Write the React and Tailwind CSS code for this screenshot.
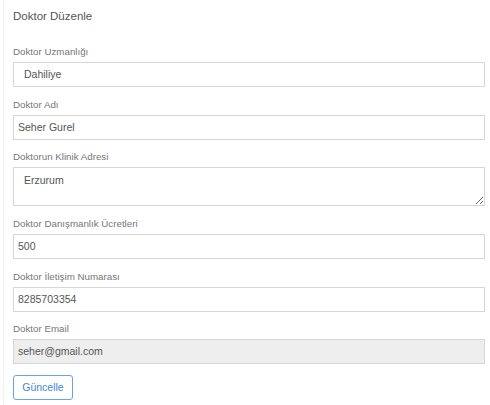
import React from "react";

const font = { fontFamily: '"Liberation Sans", Arial, sans-serif' };

function Label({ children, className = "" }) {
  return (
    <div className={`text-[9.75px] leading-[13px] text-[#777777] mb-[4px] ${className}`}>
      {children}
    </div>
  );
}

function Field({ value, indent = false, disabled = false }) {
  return (
    <div
      className={`h-[25px] w-full border border-[#d6d6d6] flex items-center text-[10.5px] text-[#555555] ${
        indent ? "pl-[10px]" : "pl-[4px]"
      } ${disabled ? "bg-[#eeeeee]" : "bg-white"}`}
    >
      {value}
    </div>
  );
}

export default function App() {
  return (
    <div className="w-[490px] h-[405px] bg-white overflow-hidden" style={font}>
      <div className="ml-[3px] border-l border-[#f3f3f3] h-full pl-[9px] pr-[5px] pt-[9px]">
        <div className="text-[11.5px] leading-[14px] text-[#555555]">Doktor Düzenle</div>

        <div className="mt-[22px]">
          <Label>Doktor Uzmanlığı</Label>
          <Field value="Dahiliye" indent />
        </div>

        <div className="mt-[11px]">
          <Label>Doktor Adı</Label>
          <Field value="Seher Gurel" />
        </div>

        <div className="mt-[10px]">
          <Label>Doktorun Klinik Adresi</Label>
          <textarea
            readOnly
            defaultValue="Erzurum"
            className="block h-[39px] w-full border border-[#d6d6d6] pl-[10px] pt-[5px] text-[10.5px] leading-[14px] text-[#555555] outline-none resize-y"
            style={font}
          />
        </div>

        <div className="mt-[11px]">
          <Label>Doktor Danışmanlık Ücretleri</Label>
          <Field value="500" />
        </div>

        <div className="mt-[11px]">
          <Label>Doktor İletişim Numarası</Label>
          <Field value="8285703354" />
        </div>

        <div className="mt-[10px]">
          <Label>Doktor Email</Label>
          <Field value="seher@gmail.com" disabled />
        </div>

        <button
          className="mt-[11px] h-[25px] w-[60px] rounded-[3px] border border-[#6aa3e0] text-[10.5px] text-[#3f87d6] bg-white flex items-center justify-center"
          style={font}
        >
          Güncelle
        </button>
      </div>
    </div>
  );
}
